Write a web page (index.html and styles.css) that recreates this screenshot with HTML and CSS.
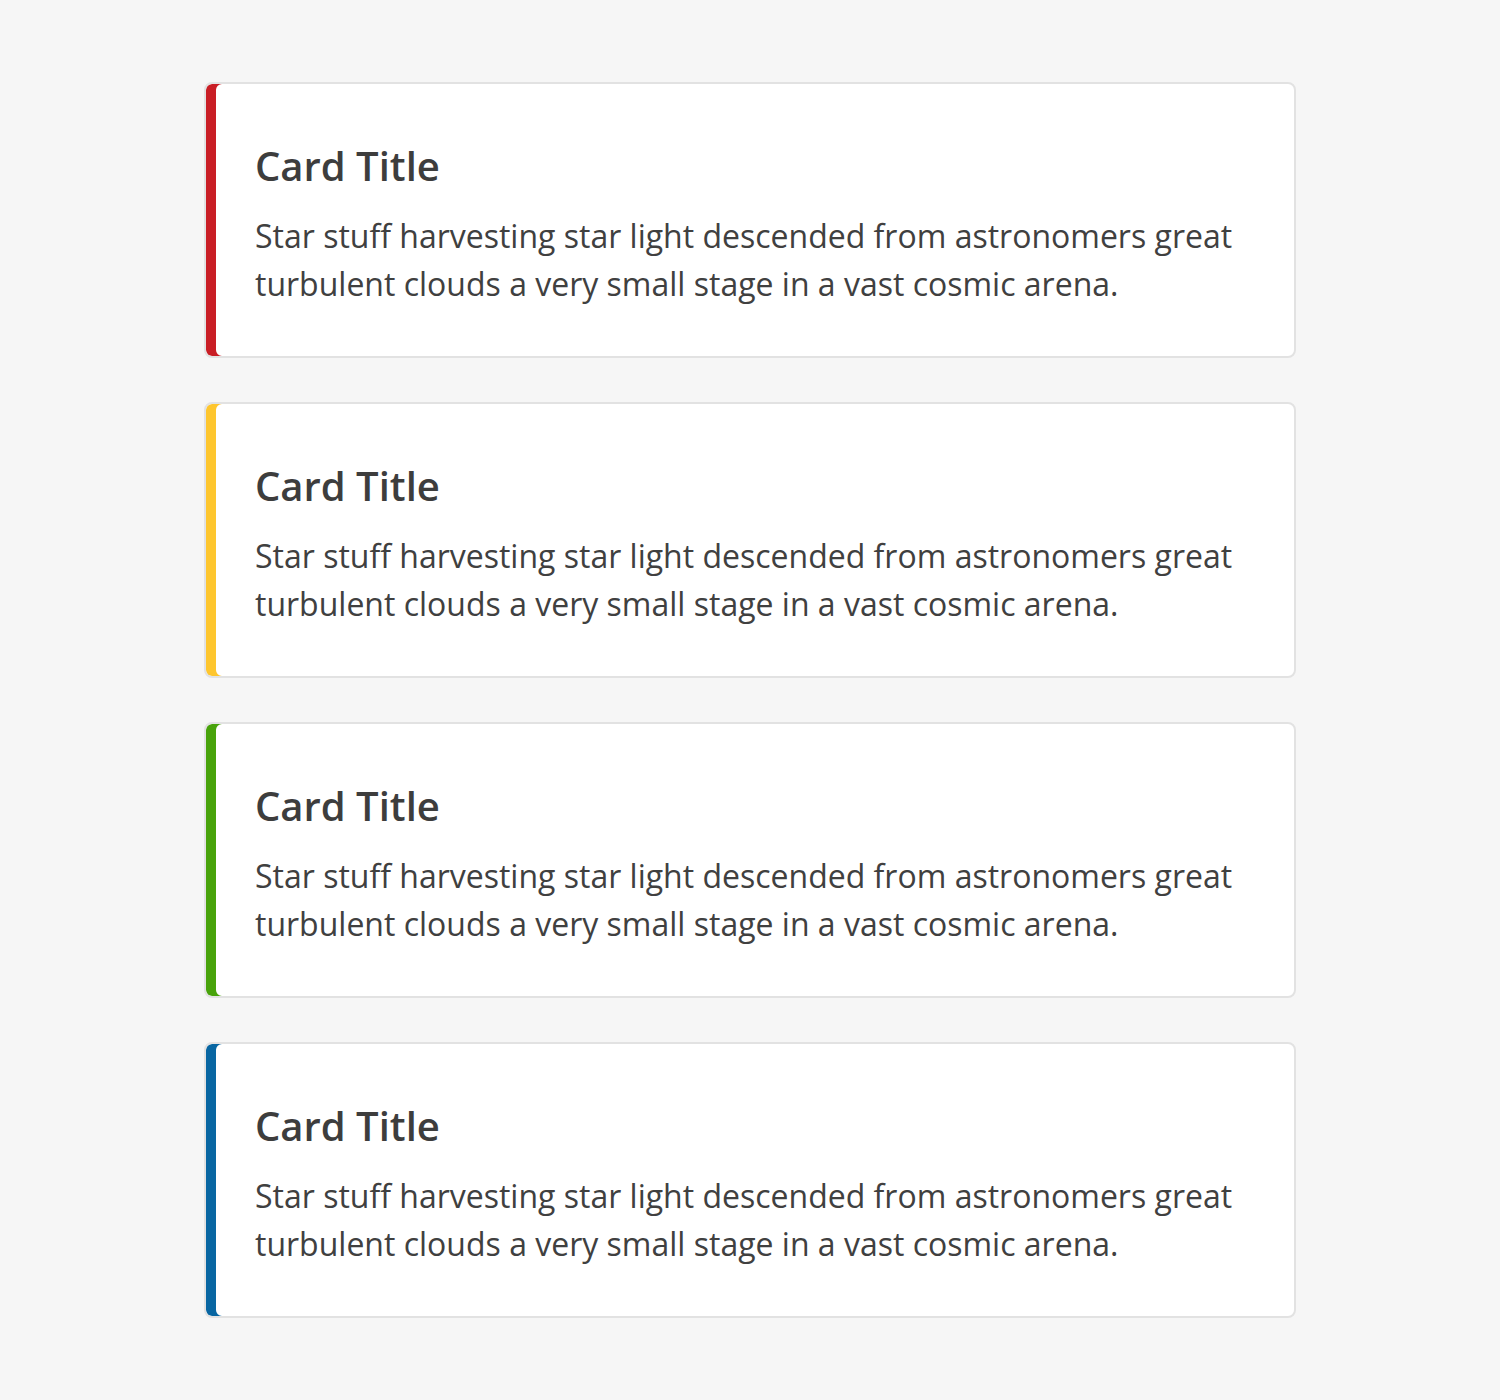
FILE: index.html
```html
<!DOCTYPE html>
<html lang="en">
<head>
<meta charset="utf-8">
<title>Cards</title>
<link rel="stylesheet" href="styles.css">
</head>
<body>
<main class="card-list">
  <article class="card card-red">
    <h2 class="card-title">Card Title</h2>
    <p class="card-text">Star stuff harvesting star light descended from astronomers great turbulent clouds a very small stage in a vast cosmic arena.</p>
  </article>
  <article class="card card-yellow">
    <h2 class="card-title">Card Title</h2>
    <p class="card-text">Star stuff harvesting star light descended from astronomers great turbulent clouds a very small stage in a vast cosmic arena.</p>
  </article>
  <article class="card card-green">
    <h2 class="card-title">Card Title</h2>
    <p class="card-text">Star stuff harvesting star light descended from astronomers great turbulent clouds a very small stage in a vast cosmic arena.</p>
  </article>
  <article class="card card-blue">
    <h2 class="card-title">Card Title</h2>
    <p class="card-text">Star stuff harvesting star light descended from astronomers great turbulent clouds a very small stage in a vast cosmic arena.</p>
  </article>
</main>
</body>
</html>
```
FILE: styles.css
```css
html, body {
  margin: 0;
  padding: 0;
  background: #f6f6f6;
}
body {
  font-family: "Open Sans", "Noto Sans", sans-serif;
  color: #3f3f3f;
}
.card-list {
  width: 1092px;
  margin: 82px auto 0;
  display: flex;
  flex-direction: column;
  gap: 44px;
}
.card {
  background: #fff;
  border: 2px solid #e2e2e2;
  border-radius: 8px;
  padding: 58px 40px 48px 49px;
  box-shadow: inset 10px 0 0 var(--accent);
}
.card-red { --accent: #c91e25; }
.card-yellow { --accent: #fec62e; }
.card-green { --accent: #48a30b; }
.card-blue { --accent: #0866a2; }
.card-title {
  margin: 0;
  font-size: 40px;
  line-height: 48px;
  font-weight: 600;
  color: #3d3d3d;
}
.card-text {
  margin: 22px 0 0;
  font-size: 32px;
  line-height: 48px;
  font-weight: 400;
  color: #404040;
}
```
